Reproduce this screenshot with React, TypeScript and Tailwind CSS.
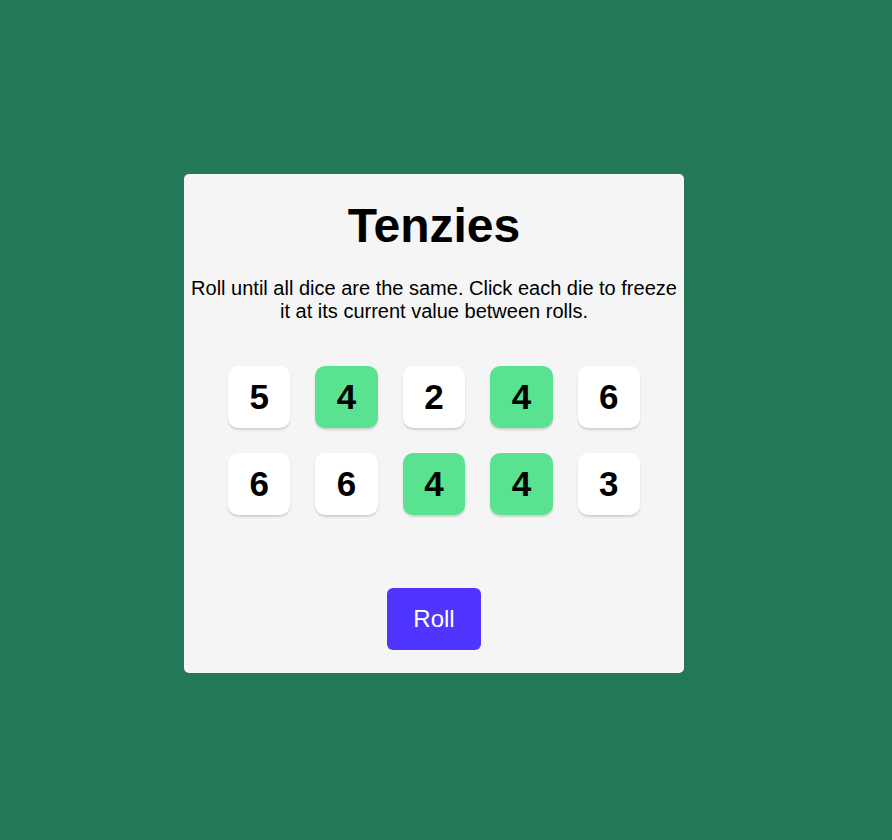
// Tenzies board: ten dice, held ones in green, roll button below
const dice = [
  { value: 5, held: false },
  { value: 4, held: true },
  { value: 2, held: false },
  { value: 4, held: true },
  { value: 6, held: false },
  { value: 6, held: false },
  { value: 6, held: false },
  { value: 4, held: true },
  { value: 4, held: true },
  { value: 3, held: false },
];

function Die({ value, held }: { value: number; held: boolean }) {
  return (
    <button
      className={`flex h-[62px] items-center justify-center rounded-[10px] text-[35px] font-bold text-black shadow-[0_2px_2px_rgba(0,0,0,0.15)] ${
        held ? "bg-[#59e391]" : "bg-white"
      }`}
    >
      {value}
    </button>
  );
}

export default function App() {
  return (
    <div className="min-h-[840px] bg-[#237857] pl-[184px] pt-[174px] font-['Liberation_Sans',Arial,sans-serif]">
      <main className="flex h-[499px] w-[500px] flex-col items-center rounded-[5px] bg-[#f5f5f5] pt-[24px]">
        <h1 className="text-[48px] font-bold leading-[55px] text-black">Tenzies</h1>
        <p className="mt-[24px] px-[6px] text-center text-[20px] leading-[23px] text-black">
          Roll until all dice are the same. Click each die to freeze it at its current value between rolls.
        </p>
        <div className="mt-[43px] grid w-full grid-cols-5 gap-x-[25px] gap-y-[25px] px-[44px]">
          {dice.map((d, i) => (
            <Die key={i} value={d.value} held={d.held} />
          ))}
        </div>
        <button className="mt-[73px] h-[62px] w-[94px] rounded-[6px] bg-[#5035ff] text-[24px] text-white">
          Roll
        </button>
      </main>
    </div>
  );
}
